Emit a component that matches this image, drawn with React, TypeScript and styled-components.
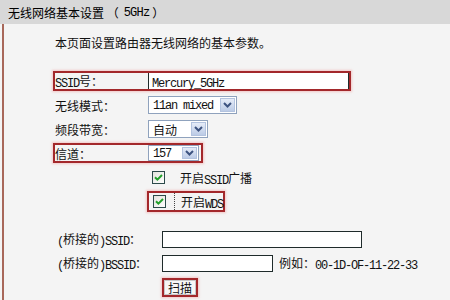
import React from 'react';
import styled, { createGlobalStyle } from 'styled-components';

const GlobalStyle = createGlobalStyle`
  html, body {
    margin: 0;
    padding: 0;
    background: #f4f4f4;
  }
  body {
    font-family: "Noto Sans CJK SC", "Liberation Sans", sans-serif;
    font-size: 12px;
    color: #111;
  }
`;

function Chevron() {
  return (
    <svg width="9" height="6" viewBox="0 0 9 6">
      <path d="M1 1 L4.5 4.5 L8 1" stroke="#3d5380" strokeWidth="2" fill="none" />
    </svg>
  );
}

function CheckMark() {
  return (
    <svg width="13" height="13" viewBox="0 0 13 13">
      <defs>
        <linearGradient id="cbg" x1="0" y1="0" x2="1" y2="1">
          <stop offset="0" stopColor="#e2e2dc" />
          <stop offset="1" stopColor="#ffffff" />
        </linearGradient>
      </defs>
      <rect x="0.5" y="0.5" width="12" height="12" fill="url(#cbg)" stroke="#2c4a4a" />
      <path d="M3 6.2 L5.4 8.6 L10 4" stroke="#21a02a" strokeWidth="2" fill="none" />
    </svg>
  );
}

function App() {
  return (
    <Page>
      <GlobalStyle />
      <TitleBar>
        无线网络基本设置 （<TitleMono>5GHz</TitleMono>）
      </TitleBar>
      <Panel>
        <Intro>本页面设置路由器无线网络的基本参数。</Intro>

        <Form>
          <Row>
            <Field $marked $h={20}>
              <Label><Mono>SSID</Mono>号：</Label>
              <TextBox $w={201} $h={16} $flat>
                <Mono>Mercury_5GHz</Mono>
              </TextBox>
            </Field>
          </Row>
          <Row>
            <Field $h={20}>
              <Label>无线模式：</Label>
              <Select>
                <SelectValue $w={70}><Mono>11an mixed</Mono></SelectValue>
                <Arrow><Chevron /></Arrow>
              </Select>
            </Field>
          </Row>
          <Row>
            <Field $h={20}>
              <Label>频段带宽：</Label>
              <Select>
                <SelectValue $w={41}>自动</SelectValue>
                <Arrow><Chevron /></Arrow>
              </Select>
            </Field>
          </Row>
          <Row>
            <Field $marked $h={20} $pr={2}>
              <Label>信道：</Label>
              <Select $h={16}>
                <SelectValue $w={32}><Mono>157</Mono></SelectValue>
                <Arrow><Chevron /></Arrow>
              </Select>
            </Field>
          </Row>
          <Row $indent={142}>
            <Field $h={21}>
              <CheckMark />
              <CheckText>开启<Mono>SSID</Mono>广播</CheckText>
            </Field>
          </Row>
          <Row $indent={143}>
            <Field $marked $h={21}>
              <CheckMark />
              <CheckText $focus>开启<Mono>WDS</Mono></CheckText>
            </Field>
          </Row>
        </Form>

        <Bridge>
          <Row $indent={51}>
            <Field $h={20}>
              <Label $w={105}><Mono>(</Mono>桥接的<Mono>)SSID</Mono>：</Label>
              <TextBox $w={200} $h={17} />
            </Field>
          </Row>
          <Row $indent={51}>
            <Field $h={20}>
              <Label $w={105}><Mono>(</Mono>桥接的<Mono>)BSSID</Mono>：</Label>
              <TextBox $w={111} $h={17} />
              <Hint>例如：<Mono>00-1D-OF-11-22-33</Mono></Hint>
            </Field>
          </Row>
          <Row $indent={158}>
            <Field $marked $h={19}>
              <ScanButton>扫描</ScanButton>
            </Field>
          </Row>
        </Bridge>
      </Panel>
    </Page>
  );
}

export default App;

const Page = styled.div`
  width: 450px;
  height: 300px;
  overflow: hidden;
  background: #f4f4f4;
`;

const TitleBar = styled.div`
  height: 24px;
  box-sizing: border-box;
  padding-left: 8px;
  display: flex;
  align-items: center;
  background: #d8d8d8;
  color: #000;
  white-space: nowrap;
`;

const Mono = styled.span`
  font-family: "Liberation Mono", monospace;
  letter-spacing: -1.2px;
  position: relative;
  top: 1px;
`;

const TitleMono = styled(Mono)`
  margin: 0 3px 0 5px;
  letter-spacing: -0.8px;
`;

const Panel = styled.div`
  margin-left: 2px;
  border-left: 2px solid #a8685a;
  height: 276px;
  box-sizing: border-box;
  padding-top: 11px;
`;

const Intro = styled.p`
  margin: 0 0 0 51px;
  line-height: 16px;
  height: 16px;
  color: #111;
`;

const Form = styled.div`
  margin-top: 18px;
  display: flex;
  flex-direction: column;
`;

const Bridge = styled.div`
  margin-top: 14px;
  display: flex;
  flex-direction: column;
`;

const Row = styled.div<{ $indent?: number }>`
  height: 24px;
  display: flex;
  align-items: center;
  padding-left: ${(p) => p.$indent ?? 49}px;
`;

const Field = styled.div<{ $marked?: boolean; $h: number; $pr?: number }>`
  display: inline-flex;
  align-items: center;
  box-sizing: border-box;
  height: ${(p) => p.$h}px;
  padding-right: ${(p) => p.$pr ?? 0}px;
  border: 2px solid ${(p) => (p.$marked ? '#a3282b' : 'transparent')};
  box-shadow: ${(p) => (p.$marked ? '0 0 2px 1px rgba(240, 160, 160, 0.55)' : 'none')};
  white-space: nowrap;

  & > svg {
    margin-left: 4px;
    flex-shrink: 0;
  }
`;

const Label = styled.span<{ $w?: number }>`
  width: ${(p) => p.$w ?? 93}px;
  flex-shrink: 0;
  color: #111;
`;

const TextBox = styled.div<{ $w: number; $h: number; $flat?: boolean }>`
  width: ${(p) => p.$w}px;
  height: ${(p) => p.$h}px;
  box-sizing: border-box;
  padding-left: 3px;
  line-height: ${(p) => p.$h - (p.$flat ? 0 : 2)}px;
  background: #fff;
  border: 1px solid #1f2b2b;
  border-top-width: ${(p) => (p.$flat ? 0 : 1)}px;
  border-bottom-width: ${(p) => (p.$flat ? 0 : 1)}px;
  color: #111;
`;

const Select = styled.div<{ $h?: number }>`
  display: inline-flex;
  align-items: stretch;
  height: ${(p) => p.$h ?? 18}px;
  box-sizing: border-box;
  border: 1px solid #8fa2bd;
  background: #fff;
`;

const SelectValue = styled.span<{ $w: number }>`
  width: ${(p) => p.$w}px;
  box-sizing: border-box;
  padding-left: 4px;
  display: flex;
  align-items: center;
  color: #111;
`;

const Arrow = styled.span`
  width: 15px;
  margin: 1px;
  box-sizing: border-box;
  display: flex;
  align-items: center;
  justify-content: center;
  border: 1px solid #b3c3df;
  background: linear-gradient(#e6ecf8, #bccbe6);
`;

const CheckText = styled.span<{ $focus?: boolean }>`
  margin-left: 8px;
  padding-left: 6px;
  height: 17px;
  line-height: 17px;
  border-left: 1px dotted ${(p) => (p.$focus ? '#444' : 'transparent')};
  color: #111;
`;

const Hint = styled.span`
  margin-left: 6px;
  color: #111;
`;

const ScanButton = styled.span`
  height: 15px;
  box-sizing: border-box;
  padding: 0 3px;
  display: flex;
  align-items: center;
  background: #f7f7f7;
  border: 1px solid #c8c8c8;
  color: #111;
`;
